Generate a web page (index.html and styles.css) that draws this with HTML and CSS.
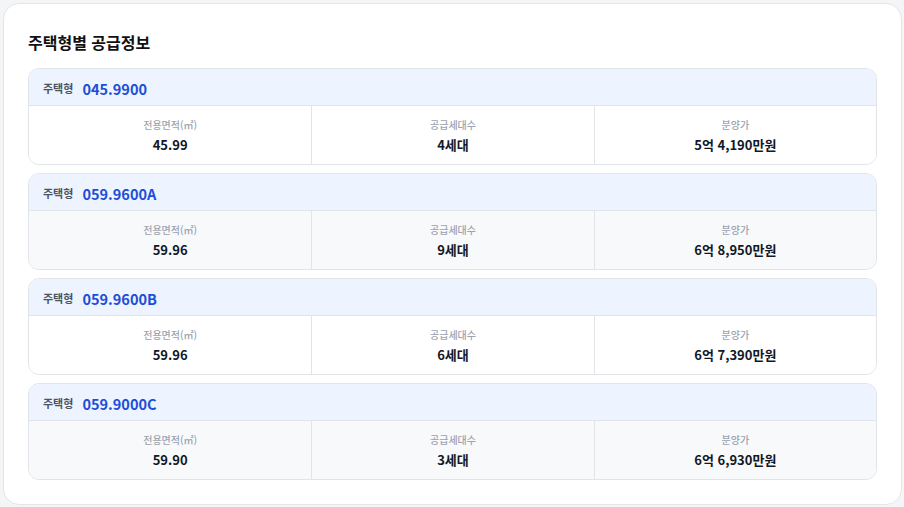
FILE: index.html
```html
<!DOCTYPE html>
<html lang="ko">

<head>
    <meta charset="UTF-8">
    <meta name="viewport" content="width=device-width, initial-scale=1.0">
    <link rel="stylesheet" href="styles.css">
    <title>주택형별 공급정보</title>
</head>

<body>

    <div class="supply-panel">
        <h2 class="supply-title">주택형별 공급정보</h2>

        <div class="supply-list">
            <div class="supply-item">
                <div class="supply-item-header">
                    <span class="supply-item-label">주택형</span>
                    <span class="supply-item-type">045.9900</span>
                </div>
                <div class="supply-item-body">
                    <div class="supply-cell">
                        <div class="supply-cell-label">전용면적(㎡)</div>
                        <div class="supply-cell-value">45.99</div>
                    </div>
                    <div class="supply-cell">
                        <div class="supply-cell-label">공급세대수</div>
                        <div class="supply-cell-value">4세대</div>
                    </div>
                    <div class="supply-cell">
                        <div class="supply-cell-label">분양가</div>
                        <div class="supply-cell-value">5억 4,190만원</div>
                    </div>
                </div>
            </div>

            <div class="supply-item">
                <div class="supply-item-header">
                    <span class="supply-item-label">주택형</span>
                    <span class="supply-item-type">059.9600A</span>
                </div>
                <div class="supply-item-body">
                    <div class="supply-cell">
                        <div class="supply-cell-label">전용면적(㎡)</div>
                        <div class="supply-cell-value">59.96</div>
                    </div>
                    <div class="supply-cell">
                        <div class="supply-cell-label">공급세대수</div>
                        <div class="supply-cell-value">9세대</div>
                    </div>
                    <div class="supply-cell">
                        <div class="supply-cell-label">분양가</div>
                        <div class="supply-cell-value">6억 8,950만원</div>
                    </div>
                </div>
            </div>

            <div class="supply-item">
                <div class="supply-item-header">
                    <span class="supply-item-label">주택형</span>
                    <span class="supply-item-type">059.9600B</span>
                </div>
                <div class="supply-item-body">
                    <div class="supply-cell">
                        <div class="supply-cell-label">전용면적(㎡)</div>
                        <div class="supply-cell-value">59.96</div>
                    </div>
                    <div class="supply-cell">
                        <div class="supply-cell-label">공급세대수</div>
                        <div class="supply-cell-value">6세대</div>
                    </div>
                    <div class="supply-cell">
                        <div class="supply-cell-label">분양가</div>
                        <div class="supply-cell-value">6억 7,390만원</div>
                    </div>
                </div>
            </div>

            <div class="supply-item">
                <div class="supply-item-header">
                    <span class="supply-item-label">주택형</span>
                    <span class="supply-item-type">059.9000C</span>
                </div>
                <div class="supply-item-body">
                    <div class="supply-cell">
                        <div class="supply-cell-label">전용면적(㎡)</div>
                        <div class="supply-cell-value">59.90</div>
                    </div>
                    <div class="supply-cell">
                        <div class="supply-cell-label">공급세대수</div>
                        <div class="supply-cell-value">3세대</div>
                    </div>
                    <div class="supply-cell">
                        <div class="supply-cell-label">분양가</div>
                        <div class="supply-cell-value">6억 6,930만원</div>
                    </div>
                </div>
            </div>
        </div>
    </div>

</body>

</html>
```

FILE: styles.css
```css
html,
body {
    margin: 0;
    padding: 0;
}

body {
    background-color: #f4f5f7;
    font-family: "Noto Sans CJK KR", "Noto Sans", sans-serif;
    color: #111827;
    padding: 3px 2px 2px 3px;
}

.supply-panel {
    background-color: #fff;
    border: 1px solid #e3e5e9;
    border-radius: 16px;
    padding: 24px;
    height: 502px;
    box-sizing: border-box;
}

.supply-title {
    margin: 2px 0 14px;
    font-size: 16px;
    line-height: 24px;
    font-weight: 700;
    color: #111;
}

.supply-list {
    display: flex;
    flex-direction: column;
    gap: 8px;
}

.supply-item {
    border: 1px solid #e1e4e9;
    border-radius: 11px;
    overflow: hidden;
}

.supply-item-header {
    display: flex;
    align-items: center;
    gap: 9px;
    height: 37px;
    padding: 2px 14px 0;
    box-sizing: border-box;
    background-color: #edf4ff;
    border-bottom: 1px solid #e1e4e9;
}

.supply-item-label {
    font-size: 11px;
    font-weight: 700;
    color: #4b5563;
}

.supply-item-type {
    font-size: 14.5px;
    font-weight: 700;
    color: #1d4ed8;
}

.supply-item-body {
    display: grid;
    grid-template-columns: repeat(3, 1fr);
    background-color: #fff;
}

.supply-item:nth-child(even) .supply-item-body {
    background-color: #f8f9fb;
}

.supply-cell {
    display: flex;
    flex-direction: column;
    align-items: center;
    height: 58px;
    padding-top: 12px;
    box-sizing: border-box;
    border-left: 1px solid #e1e4e9;
}

.supply-cell:first-child {
    border-left: none;
}

.supply-cell-label {
    font-size: 10px;
    line-height: 14px;
    font-weight: 500;
    color: #9ca3af;
}

.supply-cell-value {
    margin-top: 4px;
    font-size: 13px;
    line-height: 18px;
    font-weight: 700;
    color: #111827;
}
```
